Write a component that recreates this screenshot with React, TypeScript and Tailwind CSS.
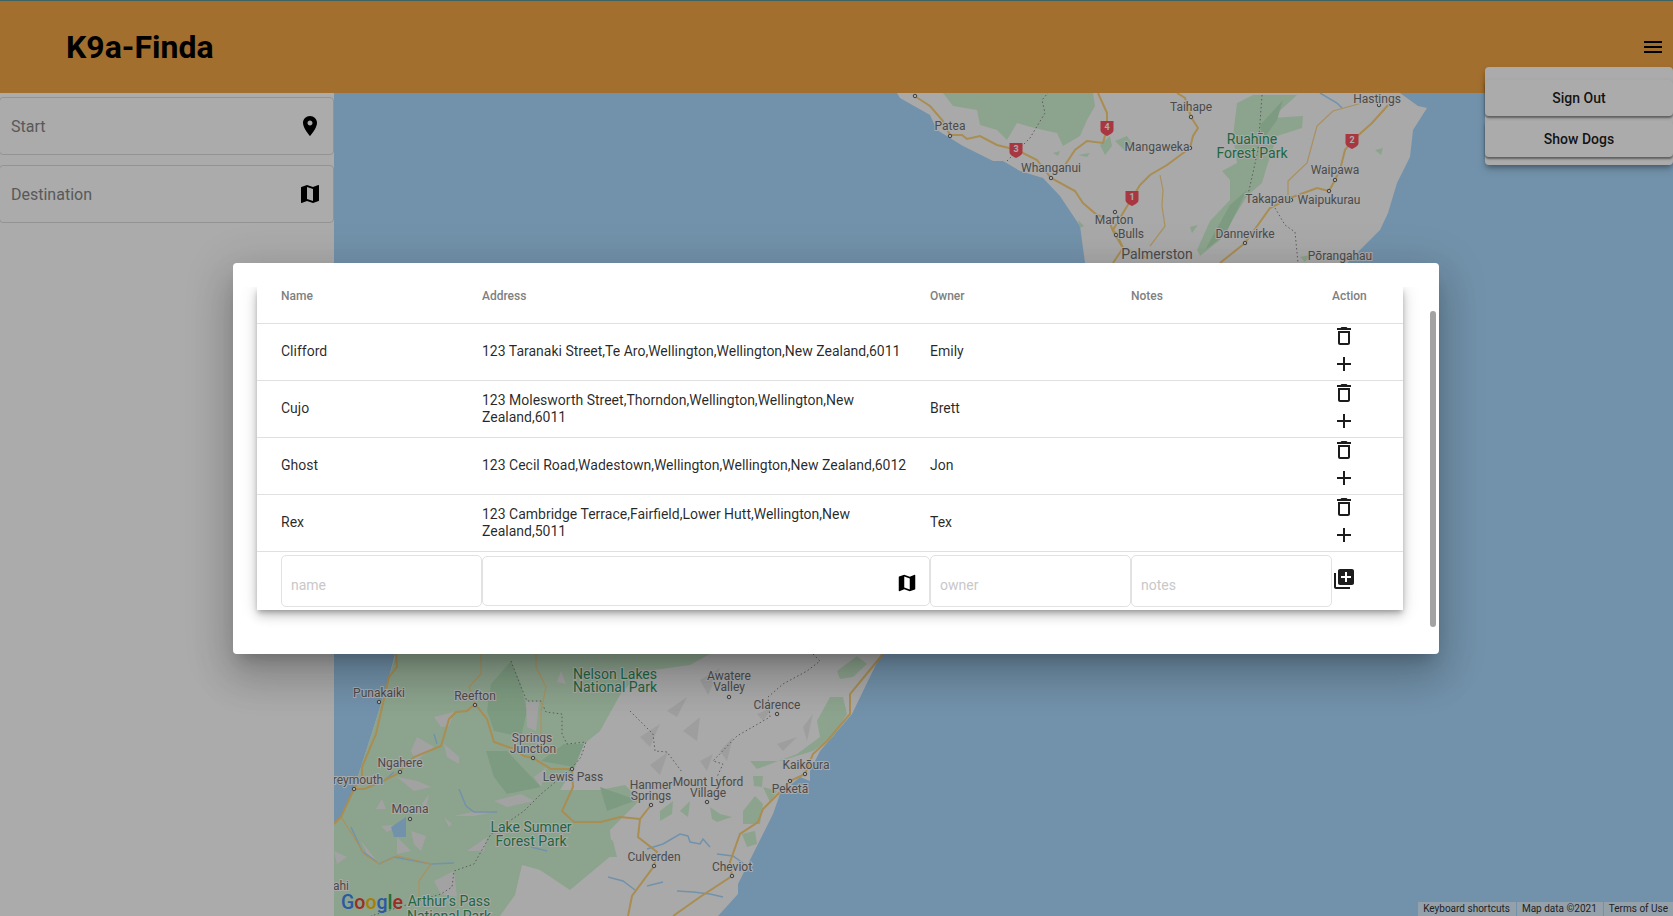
const ICONS = {
  room: "M12 2C8.13 2 5 5.13 5 9c0 5.25 7 13 7 13s7-7.75 7-13c0-3.87-3.13-7-7-7zm0 9.5c-1.38 0-2.5-1.12-2.5-2.5s1.12-2.5 2.5-2.5 2.5 1.12 2.5 2.5-1.12 2.5-2.5 2.5z",
  map: "M20.5 3l-.16.03L15 5.1 9 3 3.36 4.9c-.21.07-.36.25-.36.48V20.5c0 .28.22.5.5.5l.16-.03L9 18.9l6 2.1 5.64-1.9c.21-.07.36-.25.36-.48V3.5c0-.28-.22-.5-.5-.5zM15 19l-6-2.11V5l6 2.11V19z",
  menu: "M3 18h18v-2H3v2zm0-5h18v-2H3v2zm0-7v2h18V6H3z",
  trash: "M6 19c0 1.1.9 2 2 2h8c1.1 0 2-.9 2-2V7H6v12zM8 9h8v10H8V9zm7.5-5l-1-1h-5l-1 1H5v2h14V4z",
  add: "M19 13h-6v6h-2v-6H5v-2h6V5h2v6h6v2z",
  libraryAdd: "M4 6H2v14c0 1.1.9 2 2 2h14v-2H4V6zm16-4H8c-1.1 0-2 .9-2 2v12c0 1.1.9 2 2 2h12c1.1 0 2-.9 2-2V4c0-1.1-.9-2-2-2zm-1 9h-4v4h-2v-4H9V9h4V5h2v4h4v2z",
};

function Icon({ d, className = "w-6 h-6" }: { d: string; className?: string }) {
  return (
    <svg viewBox="0 0 24 24" className={`shrink-0 fill-current ${className}`}>
      <path d={d} />
    </svg>
  );
}

const dogs = [
  { name: "Clifford", address: "123 Taranaki Street,Te Aro,Wellington,Wellington,New Zealand,6011", owner: "Emily" },
  { name: "Cujo", address: "123 Molesworth Street,Thorndon,Wellington,Wellington,New Zealand,6011", owner: "Brett" },
  { name: "Ghost", address: "123 Cecil Road,Wadestown,Wellington,Wellington,New Zealand,6012", owner: "Jon" },
  { name: "Rex", address: "123 Cambridge Terrace,Fairfield,Lower Hutt,Wellington,New Zealand,5011", owner: "Tex" },
];

// map shapes, all in page coordinates (the svg viewBox starts at the map's corner)
const forest = [
  "943,93 1093,93 1095,106 1087,120 1080,136 1063,146 1057,133 1043,130 1027,126 1017,123 1007,140 997,130 980,125 977,110 953,106",
  "1100,145 1110,136 1112,146 1105,155",
  "1115,141 1127,136 1137,150 1125,151",
  "1078,155 1090,153 1087,157",
  "1053,153 1060,151 1058,156",
  "1237,103 1253,95 1297,95 1272,118 1303,116 1302,128 1277,136 1267,166 1262,183 1247,196 1220,240 1200,256 1197,250 1210,221 1230,200 1230,180 1222,171 1237,163 1233,136",
  "1078,220 1084,226 1080,228",
  "1190,227 1198,225 1192,233",
  "1375,150 1383,148 1381,155",
  "1300,257 1310,255 1305,262",
  "396,654 710,654 690,665 640,672 620,695 600,731 584,744 575,767 560,790 600,790 625,785 640,800 625,815 610,830 612,855 570,890 540,870 522,865 515,895 500,916 334,916 334,824 341,817 351,797 361,767 377,717 389,677",
  "817,721 830,697 843,697 847,714 833,737 813,751 780,761 750,761 757,769 797,754 820,737",
  "753,776 763,776 762,787 754,786",
  "763,787 777,791 770,802",
  "743,811 755,796 763,804 760,824 743,824",
  "710,807 720,814 732,817 717,822 712,819",
  "742,834 755,831 757,844 747,847",
  "660,811 673,801 672,814 660,821",
  "680,811 690,801 688,817",
  "837,671 857,656 867,664 853,677 840,679",
  "600,831 613,841 617,857 600,857",
];

const deepForest = [
  "491,684 511,661 521,684 527,711 521,737 494,731 487,711",
  "486,751 507,751 541,787 507,794 494,777",
  "564,744 584,744 574,767 541,761",
  "600,787 637,800 607,811",
  "1260,125 1283,100 1277,120 1263,140",
  "1230,205 1247,190 1225,235 1205,250",
];

const bare = [
  "434,717 454,712 449,726 441,727",
  "411,751 417,737 434,747 416,761",
  "444,744 459,757 459,764 447,757",
  "397,777 417,781 431,787 414,791",
  "376,809 382,799 386,809",
  "422,804 429,794 426,807",
  "454,816 477,811 494,812 474,816",
  "444,817 452,824 449,827",
  "381,826 404,824 387,832",
  "397,854 397,837 411,851",
  "411,831 426,836 421,851 414,844",
  "361,841 377,861 367,854",
  "434,881 454,871 457,897 441,894",
  "494,801 521,794 534,801 507,807",
  "334,851 347,857 337,864",
  "467,851 487,837 484,851",
  "534,777 547,767 541,787",
  "526,701 539,702 536,731 527,727",
  "561,671 566,684 557,682",
];

const shade = [
  "683,731 700,717 697,741",
  "720,751 733,737 727,761",
  "667,711 687,697 677,717",
  "757,714 773,707 763,721",
  "700,761 713,754 707,771",
  "803,727 813,714 807,741",
  "777,744 797,737 783,751",
  "640,737 660,724 650,747",
  "700,680 720,668 708,695",
  "650,765 668,752 660,775",
];

const majorRoads = [
  "913,95 930,106 943,121 950,135 962,135 967,139 980,136 997,145 1017,150 1037,160 1051,178 1075,191 1083,203 1097,215 1108,218 1113,231 1123,248 1113,263",
  "1177,93 1185,98 1191,117 1198,128 1193,136 1190,148 1167,165 1150,175 1140,185 1132,198 1120,218 1113,230 1117,235 1123,248 1148,258",
  "1098,93 1107,113 1107,128 1103,143 1087,141 1075,150 1065,165",
  "1390,103 1372,123 1353,140 1345,150 1340,170 1335,180 1329,191 1317,188 1290,198 1270,208 1245,243 1220,263",
  "396,654 397,667 389,677 376,734 362,767 362,776 354,789 341,817 334,824",
  "354,789 364,789 381,782 397,774 414,757 441,746 449,719 456,712 467,711 475,704 487,719 494,742 514,749 524,756 533,758 551,769 572,769 573,787 562,811 574,822 601,822 620,817 640,819 651,805",
  "640,819 638,837 657,852 654,866 632,896 628,916",
  "883,654 850,694 850,714 827,741 813,754 805,774 790,781 780,792 763,809 758,822 740,834 730,862 732,876 700,897 673,916",
];

const minorRoads = [
  "1288,198 1288,181 1307,163 1317,126 1333,111 1362,103 1375,100",
  "1160,175 1163,190 1162,206 1165,226 1150,246",
  "475,704 469,687 481,674 481,654",
  "536,654 536,667 546,687 541,711 541,734",
  "341,817 354,837 364,854 379,864 397,856 431,864 419,881 419,901",
];

const rivers = [
  "379,864 394,857 431,864 454,863",
  "351,827 362,851 377,862",
  "434,734 437,744",
  "394,772 384,781",
  "459,789 466,806 474,812 497,812",
  "531,847 547,851",
  "647,849 663,844 680,834 688,836 690,842 700,844 703,839 710,847",
  "717,854 733,856 747,866",
  "608,877 623,881 635,890",
  "647,886 663,882",
  "677,891 693,892 710,894 723,897",
  "1320,93 1337,103 1342,108",
];

const borders = [
  "511,661 521,687 527,701 541,701 546,712 562,714 562,734 567,744 586,742 581,757 571,769 541,794 524,811 491,834 474,864 454,871 452,887 441,894 371,916",
  "813,654 820,661 807,671 783,684 768,697 770,717 737,736 713,761 723,764 717,777",
  "630,711 653,734 655,751 667,752 682,772",
  "1007,161 1030,138 1045,113 1042,100 1048,93",
  "1262,95 1258,150 1248,195",
  "1275,208 1285,225 1295,232 1298,263",
];

const labels: { t: string; x: number; y: number; big?: boolean; green?: boolean }[] = [
  { t: "Taihape", x: 1191, y: 108 },
  { t: "Patea", x: 950, y: 127 },
  { t: "Mangaweka", x: 1157, y: 148 },
  { t: "Ruahīne", x: 1252, y: 140, big: true, green: true },
  { t: "Forest Park", x: 1252, y: 154, big: true, green: true },
  { t: "Whanganui", x: 1051, y: 169 },
  { t: "Marton", x: 1114, y: 221 },
  { t: "Bulls", x: 1131, y: 235 },
  { t: "Palmerston", x: 1157, y: 255, big: true },
  { t: "Takapau", x: 1268, y: 200 },
  { t: "Waipukurau", x: 1329, y: 201 },
  { t: "Waipawa", x: 1335, y: 171 },
  { t: "Dannevirke", x: 1245, y: 235 },
  { t: "Pōrangahau", x: 1340, y: 257 },
  { t: "Hastings", x: 1377, y: 100 },
  { t: "Punakaiki", x: 379, y: 694 },
  { t: "Reefton", x: 475, y: 697 },
  { t: "Nelson Lakes", x: 615, y: 675, big: true, green: true },
  { t: "National Park", x: 615, y: 688, big: true, green: true },
  { t: "Awatere", x: 729, y: 677 },
  { t: "Valley", x: 729, y: 688 },
  { t: "Clarence", x: 777, y: 706 },
  { t: "Springs", x: 532, y: 739 },
  { t: "Junction", x: 533, y: 750 },
  { t: "Ngahere", x: 400, y: 764 },
  { t: "reymouth", x: 358, y: 781 },
  { t: "Lewis Pass", x: 573, y: 778 },
  { t: "ahi", x: 341, y: 887 },
  { t: "Hanmer", x: 651, y: 786 },
  { t: "Springs", x: 651, y: 797 },
  { t: "Mount Lyford", x: 708, y: 783 },
  { t: "Village", x: 708, y: 794 },
  { t: "Kaikōura", x: 806, y: 766 },
  { t: "Peketā", x: 790, y: 790 },
  { t: "Moana", x: 410, y: 810 },
  { t: "Lake Sumner", x: 531, y: 828, big: true, green: true },
  { t: "Forest Park", x: 531, y: 842, big: true, green: true },
  { t: "Culverden", x: 654, y: 858 },
  { t: "Cheviot", x: 732, y: 868 },
  { t: "Arthur's Pass", x: 449, y: 902, big: true, green: true },
  { t: "National Park", x: 449, y: 917, big: true, green: true },
];

const towns = [
  [915, 96], [1191, 117], [950, 136], [1190, 148], [1051, 178], [1115, 212], [1116, 235], [1291, 200], [1329, 191], [1335, 180], [1245, 243], [1379, 105],
  [379, 702], [475, 705], [729, 697], [777, 714], [533, 758], [572, 769], [400, 772], [354, 789], [651, 805], [707, 802], [805, 774], [790, 781], [410, 819], [654, 866], [732, 876],
];

const shields = [
  { n: "4", x: 1107, y: 128 },
  { n: "3", x: 1016, y: 150 },
  { n: "1", x: 1132, y: 198 },
  { n: "2", x: 1352, y: 141 },
];

function MapArea() {
  return (
    <svg viewBox="334 93 1339 823" className="flex-1 h-full min-w-0 bg-[#aadaff] [font-family:Roboto,sans-serif]">
      <polygon fill="#fcfcfc" points="897,93 900,98 930,115 937,130 963,146 993,161 1003,161 1020,171 1043,178 1060,196 1080,226 1086,270 1340,270 1347,263 1357,253 1380,230 1388,213 1397,183 1410,157 1413,130 1427,108 1418,106 1400,93" />
      <polygon fill="#fcfcfc" points="396,650 389,677 377,717 361,767 351,797 341,817 334,824 334,916 718,916 738,894 738,884 773,814 780,794 800,777 810,781 810,771 820,751 852,714 883,650" />
      {forest.map((p) => <polygon key={p} points={p} fill="#d1f4d3" />)}
      {deepForest.map((p) => <polygon key={p} points={p} fill="#bbe8bf" />)}
      {bare.map((p) => <polygon key={p} points={p} fill="#f2f2f2" />)}
      {shade.map((p) => <polygon key={p} points={p} fill="#ececec" />)}
      <polygon points="391,827 406,817 406,837 394,837" fill="#aadaff" />
      {rivers.map((p) => <polyline key={p} points={p} fill="none" stroke="#aadaff" strokeWidth="1.5" />)}
      {borders.map((p) => <polyline key={p} points={p} fill="none" stroke="#8a8a8a" strokeWidth="1" strokeDasharray="1.5 2.5" />)}
      {minorRoads.map((p) => <polyline key={p} points={p} fill="none" stroke="#fdd98c" strokeWidth="1.25" />)}
      {majorRoads.map((p) => <polyline key={p} points={p} fill="none" stroke="#fdd27a" strokeWidth="2" />)}
      {towns.map(([x, y]) => <circle key={`${x}-${y}`} cx={x} cy={y} r="1.75" fill="#fff" stroke="#5f5f5f" strokeWidth="1" />)}
      {shields.map((s) => (
        <g key={s.n}>
          <path d={`M${s.x - 6.5} ${s.y - 7}h13v9c0 3-3.5 4.5-6.5 6c-3-1.5-6.5-3-6.5-6z`} fill="#fb5361" />
          <text x={s.x} y={s.y} textAnchor="middle" dominantBaseline="middle" className="fill-white text-[9px] font-bold">{s.n}</text>
        </g>
      ))}
      {labels.map((l) => (
        <text
          key={`${l.t}-${l.x}-${l.y}`}
          x={l.x}
          y={l.y}
          textAnchor="middle"
          dominantBaseline="middle"
          stroke="#ffffff"
          strokeWidth="2"
          className={`[paint-order:stroke] ${l.big ? "text-[14px]" : "text-[12px]"} ${l.green ? "fill-[#2f9a5c]" : "fill-[#707070]"}`}
        >
          {l.t}
        </text>
      ))}
      <text x="341" y="909" className="text-[19.5px] font-medium">
        <tspan fill="#4285f4">G</tspan>
        <tspan fill="#ea4335">o</tspan>
        <tspan fill="#fbbc05">o</tspan>
        <tspan fill="#4285f4">g</tspan>
        <tspan fill="#34a853">l</tspan>
        <tspan fill="#ea4335">e</tspan>
      </text>
    </svg>
  );
}

function SideField({ label, icon }: { label: string; icon: string }) {
  return (
    <div className="h-[58px] -ml-px flex items-center justify-between pl-[11px] pr-[11px] border border-[#dcdcdc] rounded">
      <span className="pt-[2px] text-base text-[#858585]">{label}</span>
      <Icon d={icon} className="w-6 h-6 text-black" />
    </div>
  );
}

function NewDogInput({ placeholder }: { placeholder: string }) {
  return (
    <input
      placeholder={placeholder}
      className="w-full h-[52px] pt-2 px-[9px] text-sm border border-[#e2e2e2] rounded-[5px] outline-none placeholder:text-[#c8c8c8]"
    />
  );
}

function DogsModal() {
  return (
    <div className="absolute left-[233px] top-[263px] w-[1206px] h-[391px] pt-6 bg-white rounded shadow-[0px_11px_15px_-7px_rgba(0,0,0,0.2),0px_24px_38px_3px_rgba(0,0,0,0.14),0px_9px_46px_8px_rgba(0,0,0,0.12)]">
      <div className="relative h-[343px] overflow-hidden pl-6 pr-9">
        <div className="bg-white shadow-[0px_3px_5px_-1px_rgba(0,0,0,0.25),0px_6px_10px_0px_rgba(0,0,0,0.16),0px_1px_18px_0px_rgba(0,0,0,0.12)]">
          <table className="w-[1146px] table-fixed border-collapse text-sm leading-[17px] text-black/85">
            <thead>
              <tr className="h-9 border-b border-[#e0e0e0] text-xs text-[#808080] text-left">
                <th className="w-[225px] pl-6 pb-[17px] font-medium">Name</th>
                <th className="w-[448px] pb-[17px] font-medium">Address</th>
                <th className="w-[201px] pb-[17px] font-medium">Owner</th>
                <th className="w-[201px] pb-[17px] font-medium">Notes</th>
                <th className="pb-[17px] font-medium">Action</th>
              </tr>
            </thead>
            <tbody>
              {dogs.map((dog) => (
                <tr key={dog.name} className="h-[57px] border-b border-[#e0e0e0]">
                  <td className="pl-6">{dog.name}</td>
                  <td className="pr-4">{dog.address}</td>
                  <td>{dog.owner}</td>
                  <td></td>
                  <td className="align-top">
                    <div className="flex flex-col gap-1 text-[#1c1c1c]">
                      <Icon d={ICONS.trash} />
                      <Icon d={ICONS.add} />
                    </div>
                  </td>
                </tr>
              ))}
              <tr className="h-[59px]">
                <td className="pl-6"><NewDogInput placeholder="name" /></td>
                <td>
                  <div className="h-[50px] flex items-center justify-end pt-1 pr-[11px] border border-[#e2e2e2] rounded-[5px]">
                    <Icon d={ICONS.map} className="w-[22px] h-[22px] text-black" />
                  </div>
                </td>
                <td><NewDogInput placeholder="owner" /></td>
                <td><NewDogInput placeholder="notes" /></td>
                <td className="align-top pt-[15px]"><Icon d={ICONS.libraryAdd} className="w-6 h-6 text-[#1c1c1c]" /></td>
              </tr>
            </tbody>
          </table>
        </div>
      </div>
      <div className="absolute right-[3px] top-12 w-[6px] h-[316px] rounded-full bg-[#a3a3a3]" />
    </div>
  );
}

export default function App() {
  return (
    <div className="relative w-full h-screen overflow-hidden flex flex-col bg-white [font-family:Roboto,sans-serif]">
      <header className="h-[93px] shrink-0 flex items-center justify-between pl-[66px] pr-2 bg-[#f2a645] border-t border-[#5f9494]">
        <h1 className="text-[32px] font-bold text-black">K9a-Finda</h1>
        <Icon d={ICONS.menu} className="w-6 h-6 text-black" />
      </header>

      <div className="flex-1 min-h-0 flex">
        <aside className="w-[334px] shrink-0 pt-1 flex flex-col gap-[10px] bg-white">
          <SideField label="Start" icon={ICONS.room} />
          <SideField label="Destination" icon={ICONS.map} />
        </aside>
        <MapArea />
      </div>

      <div className="absolute bottom-0 right-0 h-[14px] flex gap-px text-[10px] leading-[14px] text-[#333]">
        <span className="pl-[5px] pr-[6px] bg-white/60">Keyboard shortcuts</span>
        <span className="pl-[5px] pr-[6px] bg-white/60">Map data ©2021</span>
        <span className="px-[5px] bg-white/60">Terms of Use</span>
      </div>

      <div className="absolute right-0 top-[67px] w-[188px] h-[98px] pt-[13px] flex flex-col gap-[5px] bg-white rounded shadow-[0px_3px_5px_-1px_rgba(0,0,0,0.3),0px_5px_8px_0px_rgba(0,0,0,0.14)]">
        {["Sign Out", "Show Dogs"].map((item) => (
          <button key={item} className="h-9 text-sm font-medium text-black/90 bg-white rounded shadow-[0px_2px_2px_0px_rgba(0,0,0,0.4),0px_1px_4px_0px_rgba(0,0,0,0.1)]">
            {item}
          </button>
        ))}
      </div>

      <div className="absolute inset-0 bg-black/33" />
      <DogsModal />
    </div>
  );
}
